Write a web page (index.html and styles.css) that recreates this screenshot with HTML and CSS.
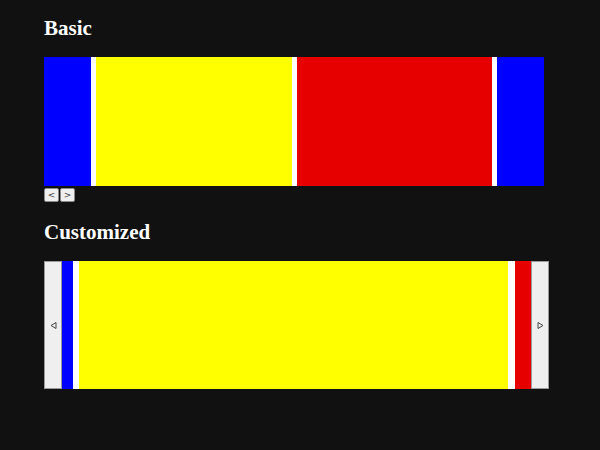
FILE: index.html
```html
<!DOCTYPE html>
<html>
<head>
<meta charset="utf-8">
<link rel="stylesheet" href="styles.css">
</head>
<body>
<div class="page">
  <section class="basic">
    <h2 class="title">Basic</h2>
    <div class="strip">
      <div class="slide blue w47"></div>
      <div class="gap w5"></div>
      <div class="slide yellow w196"></div>
      <div class="gap w5"></div>
      <div class="slide red w195"></div>
      <div class="gap w5"></div>
      <div class="slide blue w47"></div>
    </div>
    <div class="controls">
      <button class="mini">&lt;</button>
      <button class="mini">&gt;</button>
    </div>
  </section>
  <section class="custom">
    <h2 class="title">Customized</h2>
    <div class="cstrip">
      <button class="side">
        <svg width="9" height="9" viewBox="0 0 9 9"><polygon points="7,1.5 7,7.5 2,4.5" fill="none" stroke="#444" stroke-width="1"/></svg>
      </button>
      <div class="view">
        <div class="slide blue w11"></div>
        <div class="gap w6"></div>
        <div class="slide yellow w429"></div>
        <div class="gap w7"></div>
        <div class="slide red w16"></div>
      </div>
      <button class="side">
        <svg width="9" height="9" viewBox="0 0 9 9"><polygon points="2,1.5 2,7.5 7,4.5" fill="none" stroke="#444" stroke-width="1"/></svg>
      </button>
    </div>
  </section>
</div>
</body>
</html>
```
FILE: styles.css
```css
html, body {
  margin: 0;
  padding: 0;
  background: #111111;
}
.page {
  padding: 16px 0 0 44px;
}
.title {
  margin: 0;
  font-family: "Liberation Serif", "Times New Roman", serif;
  font-weight: bold;
  font-size: 21px;
  line-height: 24px;
  color: #ffffff;
}
.basic .title {
  margin-bottom: 17px;
}
.strip {
  display: flex;
  width: 500px;
  height: 129px;
}
.slide, .gap {
  flex: none;
  height: 100%;
}
.gap { background: #ffffff; }
.blue { background: #0000ff; }
.yellow { background: #ffff00; }
.red { background: #e60000; }
.w5 { width: 5px; }
.w6 { width: 6px; }
.w7 { width: 7px; }
.w11 { width: 11px; }
.w16 { width: 16px; }
.w47 { width: 47px; }
.w195 { width: 195px; }
.w196 { width: 196px; }
.w429 { width: 429px; }
.controls {
  display: flex;
  gap: 1px;
  margin-top: 2px;
  height: 14px;
}
.mini {
  width: 15px;
  height: 14px;
  padding: 0;
  margin: 0;
  border: 1px solid #8a8a8a;
  border-radius: 2px;
  background: #efefef;
  color: #444;
  font-family: "DejaVu Sans", sans-serif;
  font-size: 9px;
  line-height: 12px;
}
.custom {
  margin-top: 18px;
}
.custom .title {
  margin-bottom: 17px;
}
.cstrip {
  display: flex;
  width: 505px;
  height: 128px;
}
.view {
  display: flex;
  width: 469px;
  height: 100%;
}
.side {
  flex: none;
  width: 18px;
  height: 100%;
  padding: 0;
  margin: 0;
  border: 1px solid #9a9a9a;
  background: #efefef;
  display: flex;
  align-items: center;
  justify-content: center;
}
.side svg { display: block; }
```
